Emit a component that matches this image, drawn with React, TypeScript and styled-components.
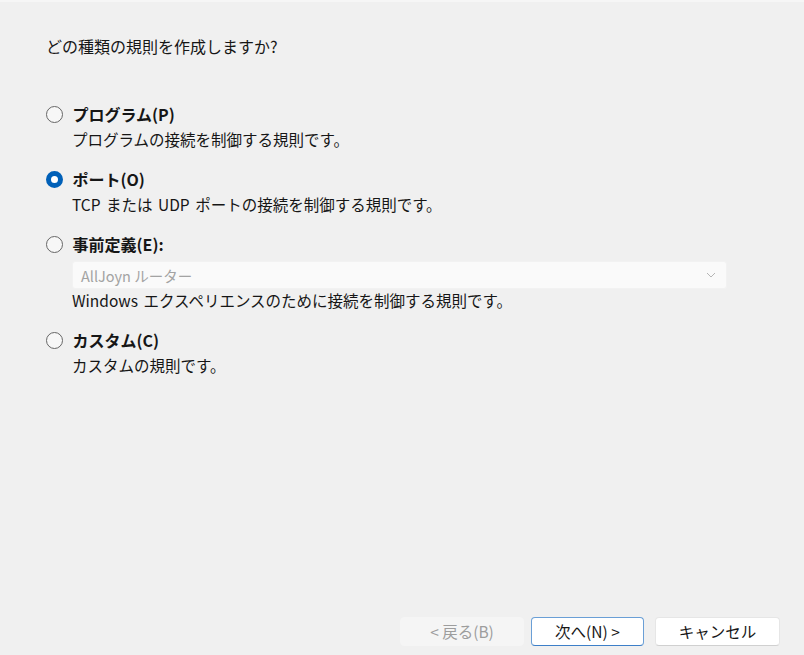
import React from 'react'
import styled, { createGlobalStyle } from 'styled-components'

const GlobalStyle = createGlobalStyle`
  html, body {
    margin: 0;
    padding: 0;
    background: #f0f0f0;
  }
  body {
    font-family: "Noto Sans CJK JP", "Noto Sans", sans-serif;
    color: #161616;
  }
`

const Page = styled.div`
  height: 100vh;
  box-sizing: border-box;
  display: flex;
  flex-direction: column;
  border-top: 2px solid #f6f6f6;
  padding: 34px 24px 9px 46px;
`

const Question = styled.div`
  font-size: 16px;
  line-height: 20px;
`

const RuleTypes = styled.ul`
  list-style: none;
  margin: 48px 0 0;
  padding: 0;
  display: flex;
  flex-direction: column;
  gap: 20px;
`

const RuleType = styled.li`
  display: flex;
  flex-direction: column;
`

const RuleLabel = styled.label`
  display: flex;
  align-items: center;
  gap: 10px;
  font-size: 16px;
  line-height: 20px;
  font-weight: 700;
`

const Radio = styled.span<{ $checked?: boolean }>`
  width: 17px;
  height: 17px;
  box-sizing: border-box;
  border-radius: 50%;
  flex: none;
  margin-left: -0.5px;
  border: ${p => (p.$checked ? '5px solid #0060b8' : '1px solid #666666')};
  background: ${p => (p.$checked ? '#ffffff' : '#f7f7f7')};
`

const RuleDescription = styled.div<{ $gap?: number }>`
  margin: ${p => p.$gap ?? 5}px 0 0 26px;
  font-size: 15.5px;
  line-height: 20px;
  word-spacing: 2px;
`

const Select = styled.div`
  margin: 7px 0 0 26px;
  width: 655px;
  height: 28px;
  box-sizing: border-box;
  display: flex;
  align-items: center;
  justify-content: space-between;
  padding: 0 10px 0 8px;
  background: #fafafa;
  border: 1px solid #f2f2f2;
  border-radius: 3px;
  font-size: 14.5px;
  color: #a3a3a3;
`

const Spacer = styled.div`
  flex: 1;
`

const Actions = styled.div`
  display: flex;
  justify-content: flex-end;
  align-items: center;
`

const Button = styled.button<{ $variant?: 'default' | 'primary' | 'disabled'; $width: number }>`
  width: ${p => p.$width}px;
  height: 29px;
  box-sizing: border-box;
  border-radius: 4px;
  font-family: inherit;
  font-size: 15.5px;
  line-height: 1;
  padding: 0;
  background: ${p => (p.$variant === 'disabled' ? '#f5f5f5' : '#ffffff')};
  color: ${p => (p.$variant === 'disabled' ? '#9d9d9d' : '#161616')};
  border: 1px solid
    ${p =>
      p.$variant === 'primary' ? '#6a9fd6' : p.$variant === 'disabled' ? '#f5f5f5' : '#e6e6e6'};
  border-bottom-color: ${p =>
    p.$variant === 'primary' ? '#3d7fc8' : p.$variant === 'disabled' ? '#f5f5f5' : '#d0d0d0'};
`

const Chevron = () => (
  <svg width="10" height="6" viewBox="0 0 10 6" fill="none">
    <path d="M1 1l4 4 4-4" stroke="#b5b5b5" strokeWidth="1" />
  </svg>
)

export default function App() {
  return (
    <>
      <GlobalStyle />
      <Page>
        <Question>どの種類の規則を作成しますか?</Question>

        <RuleTypes>
          <RuleType>
            <RuleLabel><Radio />プログラム(P)</RuleLabel>
            <RuleDescription>プログラムの接続を制御する規則です。</RuleDescription>
          </RuleType>
          <RuleType>
            <RuleLabel><Radio $checked />ポート(O)</RuleLabel>
            <RuleDescription>TCP または UDP ポートの接続を制御する規則です。</RuleDescription>
          </RuleType>
          <RuleType>
            <RuleLabel><Radio />事前定義(E):</RuleLabel>
            <Select>
              <span>AllJoyn ルーター</span>
              <Chevron />
            </Select>
            <RuleDescription $gap={1}>Windows エクスペリエンスのために接続を制御する規則です。</RuleDescription>
          </RuleType>
          <RuleType>
            <RuleLabel><Radio />カスタム(C)</RuleLabel>
            <RuleDescription>カスタムの規則です。</RuleDescription>
          </RuleType>
        </RuleTypes>

        <Spacer />

        <Actions>
          <Button $variant="disabled" $width={124} disabled>&lt; 戻る(B)</Button>
          <Button $variant="primary" $width={113} style={{ marginLeft: 7 }}>次へ(N) &gt;</Button>
          <Button $width={125} style={{ marginLeft: 11 }}>キャンセル</Button>
        </Actions>
      </Page>
    </>
  )
}
